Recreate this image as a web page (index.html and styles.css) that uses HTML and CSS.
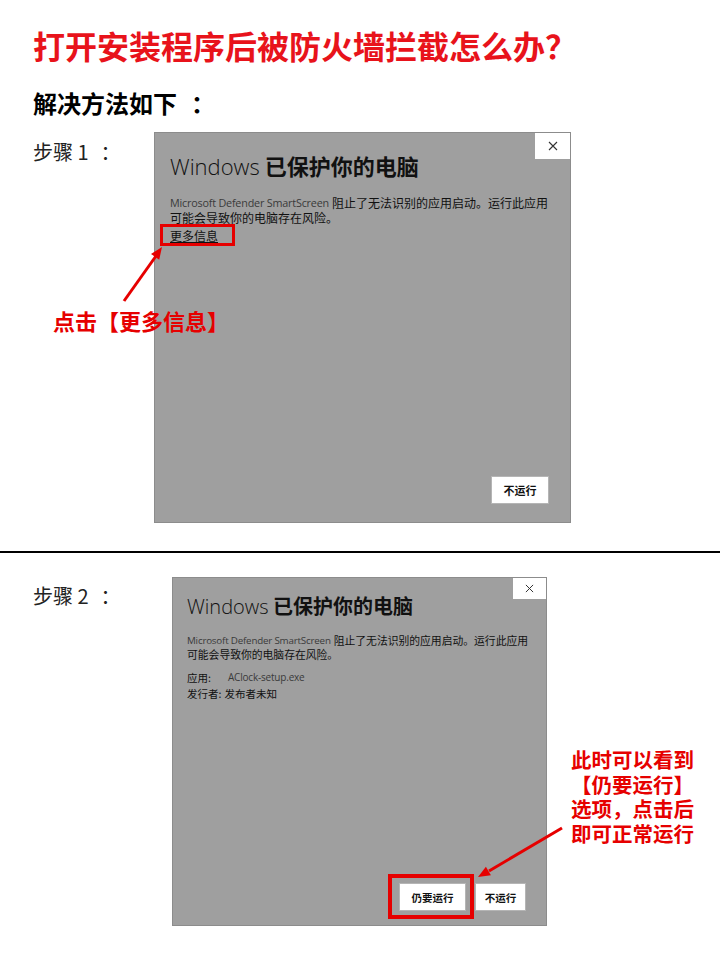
FILE: index.html
```html
<!DOCTYPE html>
<html lang="zh-CN">
<head>
<meta charset="utf-8">
<title>防火墙拦截解决方法</title>
<link rel="stylesheet" href="styles.css">
</head>
<body>
<div class="page">
  <header class="head">
    <h1 class="title">打开安装程序后被防火墙拦截怎么办？</h1>
    <h2 class="subtitle">解决方法如下<span class="colon colon-big">：</span></h2>
  </header>

  <section class="step step-one">
    <div class="label label-one">步骤 1<span class="colon colon-small">：</span></div>
    <div class="dialog dialog-one">
      <div class="close close-one">
        <svg width="10" height="10" viewBox="0 0 10 10"><path d="M1 1L9 9M9 1L1 9" stroke="#333" stroke-width="1.1" fill="none"/></svg>
      </div>
      <div class="dlg-title t-one"><span class="win">Windows</span> <b>已保护你的电脑</b></div>
      <div class="desc d-one">
        <div class="dline"><span class="en">Microsoft Defender SmartScreen</span> <span class="zh">阻止了无法识别的应用启动。运行此应用</span></div>
        <div class="dline"><span class="zh">可能会导致你的电脑存在风险。</span></div>
      </div>
      <div class="more">更多信息</div>
      <div class="redbox box-one"></div>
      <div class="spacer"></div>
      <div class="buttons">
        <div class="btn btn-one">不运行</div>
      </div>
    </div>
  </section>

  <hr class="divider">

  <section class="step step-two">
    <div class="label label-two">步骤 2<span class="colon colon-small">：</span></div>
    <div class="dialog dialog-two">
      <div class="close close-two">
        <svg width="9" height="9" viewBox="0 0 10 10"><path d="M1 1L9 9M9 1L1 9" stroke="#333" stroke-width="1.1" fill="none"/></svg>
      </div>
      <div class="dlg-title t-two"><span class="win">Windows</span> <b>已保护你的电脑</b></div>
      <div class="desc d-two">
        <div class="dline"><span class="en">Microsoft Defender SmartScreen</span> <span class="zh">阻止了无法识别的应用启动。运行此应用</span></div>
        <div class="dline"><span class="zh">可能会导致你的电脑存在风险。</span></div>
      </div>
      <div class="info">
        <div class="info-row"><span class="k k-app">应用:</span><span class="v en">AClock-setup.exe</span></div>
        <div class="info-row"><span class="k k-pub">发行者:</span><span class="v">发布者未知</span></div>
      </div>
      <div class="spacer"></div>
      <div class="buttons buttons-two">
        <div class="btn btn-run">仍要运行</div>
        <div class="btn btn-no">不运行</div>
      </div>
      <div class="redbox box-two"></div>
    </div>
    <div class="callout">
      <div class="cline">此时可以看到</div>
      <div class="cline">【仍要运行】</div>
      <div class="cline">选项，点击后</div>
      <div class="cline">即可正常运行</div>
    </div>
  </section>

  <div class="note-one">点击【更多信息】</div>

  <svg class="arrows" width="720" height="960" viewBox="0 0 720 960">
    <line x1="124" y1="301" x2="156" y2="256" stroke="#e60000" stroke-width="3"/>
    <polygon points="162,247 159.2,259.7 151,253.9" fill="#e60000"/>
    <line x1="562" y1="828" x2="489" y2="871" stroke="#e60000" stroke-width="3"/>
    <polygon points="478,877 490.9,875.3 485.9,866.7" fill="#e60000"/>
  </svg>
</div>
</body>
</html>
```

FILE: styles.css
```css
html, body {
  margin: 0;
  padding: 0;
  background: #ffffff;
}
.page {
  position: relative;
  width: 720px;
  height: 960px;
  overflow: hidden;
  font-family: "Noto Sans CJK SC", "Noto Sans", sans-serif;
  color: #111;
}
.colon {
  display: inline-block;
}
.colon-big { padding-left: 14px; }
.colon-small { padding-left: 12px; }
.head {
  padding: 25px 0 0 33px;
}
.title {
  margin: 0;
  font-size: 32px;
  line-height: 40px;
  font-weight: 700;
  color: #e8131b;
  letter-spacing: 0;
  white-space: nowrap;
}
.subtitle {
  margin: 22px 0 0 0;
  font-size: 24px;
  line-height: 32px;
  font-weight: 700;
  color: #000;
}
.step {
  display: flex;
  align-items: flex-start;
  padding-left: 33px;
}
.step-one {
  padding-top: 13px;
  padding-bottom: 28px;
}
.step-two {
  padding-top: 24px;
}
.label {
  font-size: 20px;
  line-height: 28px;
  color: #222;
  font-weight: 400;
  white-space: nowrap;
}
.label-one { width: 121px; margin-top: 6px; }
.label-two { width: 139px; margin-top: 5px; }

.divider {
  margin: 0;
  border: 0;
  height: 2px;
  background: #000;
}

.dialog {
  position: relative;
  box-sizing: border-box;
  background: #9f9f9f;
  border: 1px solid #8c8c8c;
  display: flex;
  flex-direction: column;
}
.dialog-one {
  width: 417px;
  height: 391px;
  padding: 0 21px 18px 15px;
}
.dialog-two {
  width: 375px;
  height: 349px;
  padding: 0 20px 14px 14px;
}
.close {
  position: absolute;
  top: 0;
  right: 0;
  background: #fff;
  display: flex;
  align-items: center;
  justify-content: center;
}
.close-one { width: 35px; height: 26px; }
.close-two { width: 33px; height: 21px; }

.dlg-title {
  color: #111;
  white-space: nowrap;
}
.dlg-title .win {
  font-family: "Open Sans", "Noto Sans", sans-serif;
  font-weight: 300;
  color: #111;
}
.dlg-title b {
  font-weight: 700;
}
.t-one { font-size: 22px; line-height: 30px; margin-top: 17px; }
.t-two { font-size: 20px; line-height: 28px; margin-top: 14px; }

.desc { white-space: nowrap; color: #111; }
.dline { display: flex; align-items: center; }
.dline .en { margin-right: 3px; }
.desc .en, .info .en {
  font-family: "Open Sans", "Noto Sans", sans-serif;
  font-weight: 400;
  color: #3a3a3a;
  letter-spacing: -0.2px;
}
.d-one { font-size: 12px; margin-top: 14px; }
.d-one .dline { height: 15px; }
.d-one .en { font-size: 10.8px; }
.d-two { font-size: 10.8px; margin-top: 12px; }
.d-two .dline { height: 14px; }
.d-two .en { font-size: 9.8px; }

.more {
  font-size: 12px;
  line-height: 15px;
  margin-top: 3px;
  text-decoration: underline;
  color: #111;
}
.info { margin-top: 8px; font-size: 10.5px; }
.info-row { height: 16px; display: flex; align-items: center; white-space: nowrap; }
.info .en { font-size: 10px; }
.k-app { width: 41px; }
.k-pub { margin-right: 3px; }

.spacer { flex: 1; }
.buttons {
  display: flex;
  justify-content: flex-end;
  gap: 9px;
}
.btn {
  box-sizing: border-box;
  background: #fff;
  border: 1px solid #b5b5b5;
  height: 28px;
  display: flex;
  align-items: center;
  justify-content: center;
  font-weight: 700;
  color: #111;
}
.btn-one { width: 58px; font-size: 11px; }
.btn-run { width: 67px; font-size: 10.5px; }
.btn-no { width: 51px; font-size: 10.5px; }

.redbox {
  position: absolute;
  box-sizing: border-box;
  border: 3px solid #e60000;
}
.box-one { left: 5px; top: 91px; width: 75px; height: 22px; }
.box-two { left: 215px; top: 296px; width: 86px; height: 45px; border-width: 4px; }

.callout {
  margin-left: 18px;
  width: 135px;
  margin-top: 170px;
  font-size: 20.5px;
  font-weight: 700;
  color: #e60000;
  white-space: nowrap;
}
.cline {
  height: 24.7px;
  line-height: 24.7px;
  text-align: center;
}
.note-one {
  position: absolute;
  left: 53px;
  top: 307px;
  font-size: 22px;
  line-height: 26px;
  font-weight: 700;
  color: #e60000;
  white-space: nowrap;
}
.arrows {
  position: absolute;
  left: 0;
  top: 0;
  pointer-events: none;
}
```
